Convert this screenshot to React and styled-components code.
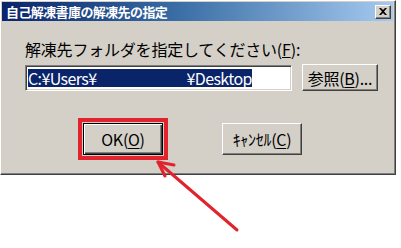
import React from 'react'
import styled, { createGlobalStyle } from 'styled-components'

const Global = createGlobalStyle`
  html, body {
    margin: 0;
    padding: 0;
    background: #ffffff;
  }
  body {
    width: 401px;
    height: 248px;
    overflow: hidden;
    position: relative;
    font-family: "Noto Sans CJK JP", "Noto Sans", sans-serif;
  }
`

const Dialog = styled.div`
  box-sizing: border-box;
  width: 396px;
  height: 175px;
  background: #d4d0c8;
  border-left: 1px solid #ffffff;
  border-top: 1px solid #ffffff;
  border-right: 1px solid #404040;
  border-bottom: 1px solid #404040;
  box-shadow: inset -1px -1px 0 #808080, inset 1px 1px 0 #d4d0c8;
  padding: 1px 2px 2px 1px;
  display: flex;
  flex-direction: column;
`

const TitleBar = styled.div`
  height: 19px;
  display: flex;
  align-items: center;
  justify-content: space-between;
  padding: 0 2px 0 4px;
  background: linear-gradient(to right, #0a246a 0%, #3a6ea5 45%, #a6caf0 100%);
`

const Title = styled.span`
  color: #ffffff;
  font-weight: bold;
  font-size: 13px;
  line-height: 19px;
  letter-spacing: -0.6px;
`

const CloseButton = styled.div`
  box-sizing: border-box;
  width: 16px;
  height: 14px;
  background: #d4d0c8;
  border-left: 1px solid #ffffff;
  border-top: 1px solid #ffffff;
  border-right: 1px solid #404040;
  border-bottom: 1px solid #404040;
  box-shadow: inset -1px -1px 0 #808080;
  display: flex;
  align-items: center;
  justify-content: center;
`

const Body = styled.div`
  padding: 18px 0 0 23px;
  display: flex;
  flex-direction: column;
`

const Label = styled.div`
  font-size: 16px;
  line-height: 20px;
  color: #000000;
  letter-spacing: -0.2px;
  u {
    text-decoration: underline;
  }
`

const FieldRow = styled.div`
  display: flex;
  align-items: center;
  gap: 10px;
  margin-top: 5px;
`

const Field = styled.div`
  box-sizing: border-box;
  width: 267px;
  height: 26px;
  background: #ffffff;
  border-left: 1px solid #808080;
  border-top: 1px solid #808080;
  border-right: 1px solid #ffffff;
  border-bottom: 1px solid #ffffff;
  box-shadow: inset 1px 1px 0 #404040, inset -1px -1px 0 #d4d0c8;
  padding: 3px 2px;
  display: flex;
`

const Selection = styled.span`
  background: #0a246a;
  color: #ffffff;
  font-size: 16px;
  line-height: 18px;
  height: 18px;
  letter-spacing: -0.6px;
  white-space: pre;
  display: flex;
`

const Gap = styled.span`
  display: inline-block;
  width: ${(p) => p.$w}px;
`

const Button = styled.div`
  box-sizing: border-box;
  width: ${(p) => p.$w}px;
  height: ${(p) => p.$h}px;
  background: #d4d0c8;
  border-left: 1px solid #ffffff;
  border-top: 1px solid #ffffff;
  border-right: 1px solid #404040;
  border-bottom: 1px solid #404040;
  box-shadow: inset -1px -1px 0 #808080;
  display: flex;
  align-items: center;
  justify-content: center;
  font-size: 16px;
  color: #000000;
  letter-spacing: -0.3px;
  white-space: nowrap;
  u {
    text-decoration: underline;
    text-underline-offset: 2px;
  }
`

const DefaultButton = styled(Button)`
  border: 1px solid #000000;
  box-shadow: inset 1px 1px 0 #ffffff, inset -1px -1px 0 #404040, inset -2px -2px 0 #808080;
`

const ButtonRow = styled.div`
  display: flex;
  align-items: center;
  gap: 54px;
  margin-top: 27px;
  padding-left: 53px;
`

const Highlight = styled.div`
  border: 4px solid #e0232c;
  padding: 1px;
  display: flex;
`

const Arrow = styled.svg`
  position: absolute;
  left: 0;
  top: 0;
  pointer-events: none;
`

export default function App() {
  return (
    <>
      <Global />
      <Dialog>
        <TitleBar>
          <Title>自己解凍書庫の解凍先の指定</Title>
          <CloseButton>
            <svg width="8" height="7" viewBox="0 0 8 7">
              <path d="M0 0 L2 0 L4 2 L6 0 L8 0 L5 3.5 L8 7 L6 7 L4 5 L2 7 L0 7 L3 3.5 Z" fill="#000" />
            </svg>
          </CloseButton>
        </TitleBar>
        <Body>
          <Label>
            解凍先フォルダを指定してください(<u>F</u>):
          </Label>
          <FieldRow>
            <Field>
              <Selection>
                C:¥Users¥<Gap $w={90} />¥Desktop
              </Selection>
            </Field>
            <Button $w={76} $h={27}>
              参照(<u>B</u>)...
            </Button>
          </FieldRow>
          <ButtonRow>
            <Highlight>
              <DefaultButton $w={80} $h={32}>
                OK(<u>O</u>)
              </DefaultButton>
            </Highlight>
            <Button $w={80} $h={32}>
              ｷｬﾝｾﾙ(<u>C</u>)
            </Button>
          </ButtonRow>
        </Body>
      </Dialog>
      <Arrow width="401" height="248" viewBox="0 0 401 248">
        <g stroke="#e0232c" strokeWidth="3" strokeLinecap="round" fill="none">
          <line x1="237" y1="230" x2="159" y2="163" />
          <line x1="158" y1="162" x2="174" y2="165" />
          <line x1="158" y1="162" x2="165" y2="176" />
        </g>
      </Arrow>
    </>
  )
}
